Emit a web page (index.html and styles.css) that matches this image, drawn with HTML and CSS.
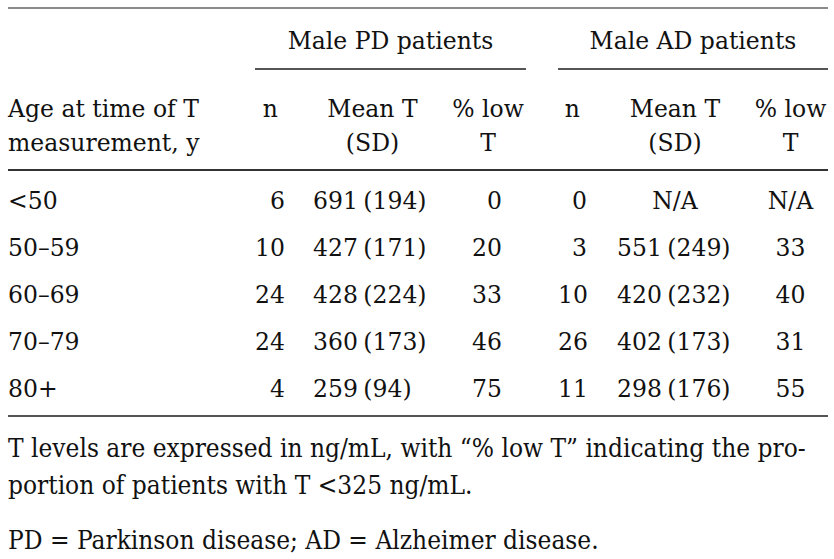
FILE: index.html
```html
<!DOCTYPE html>
<html lang="en">
<head>
<meta charset="utf-8">
<title>Testosterone levels by age</title>
<link rel="stylesheet" href="styles.css">
</head>
<body>
<div class="page">
  <div class="table">
    <div class="row group-row">
      <div class="cell"></div>
      <div class="cell group group-pd">Male PD patients</div>
      <div class="cell"></div>
      <div class="cell group group-ad">Male AD patients</div>
    </div>
    <div class="row head-row">
      <div class="cell age">Age at time of T<br>measurement, y</div>
      <div class="cell n-head">n</div>
      <div class="cell center">Mean T<br>(SD)</div>
      <div class="cell center">% low<br>T</div>
      <div class="cell"></div>
      <div class="cell n-head">n</div>
      <div class="cell center">Mean T<br>(SD)</div>
      <div class="cell center">% low<br>T</div>
    </div>
    <div class="body">
      <div class="row data-row">
        <div class="cell age">&lt;50</div>
        <div class="cell num">6</div>
        <div class="cell mean">691 (194)</div>
        <div class="cell pct">0</div>
        <div class="cell"></div>
        <div class="cell num">0</div>
        <div class="cell center">N/A</div>
        <div class="cell center">N/A</div>
      </div>
      <div class="row data-row">
        <div class="cell age">50–59</div>
        <div class="cell num">10</div>
        <div class="cell mean">427 (171)</div>
        <div class="cell pct">20</div>
        <div class="cell"></div>
        <div class="cell num">3</div>
        <div class="cell mean-ad">551 (249)</div>
        <div class="cell center">33</div>
      </div>
      <div class="row data-row">
        <div class="cell age">60–69</div>
        <div class="cell num">24</div>
        <div class="cell mean">428 (224)</div>
        <div class="cell pct">33</div>
        <div class="cell"></div>
        <div class="cell num">10</div>
        <div class="cell mean-ad">420 (232)</div>
        <div class="cell center">40</div>
      </div>
      <div class="row data-row">
        <div class="cell age">70–79</div>
        <div class="cell num">24</div>
        <div class="cell mean">360 (173)</div>
        <div class="cell pct">46</div>
        <div class="cell"></div>
        <div class="cell num">26</div>
        <div class="cell mean-ad">402 (173)</div>
        <div class="cell center">31</div>
      </div>
      <div class="row data-row">
        <div class="cell age">80+</div>
        <div class="cell num">4</div>
        <div class="cell mean">259 (94)</div>
        <div class="cell pct">75</div>
        <div class="cell"></div>
        <div class="cell num">11</div>
        <div class="cell mean-ad">298 (176)</div>
        <div class="cell center">55</div>
      </div>
    </div>
  </div>
  <div class="notes">
    <p class="note">T levels are expressed in ng/mL, with “% low T” indicating the pro-<br>portion of patients with T &lt;325 ng/mL.</p>
    <p class="note note-abbr">PD = Parkinson disease; AD = Alzheimer disease.</p>
  </div>
</div>
</body>
</html>
```
FILE: styles.css
```css
html, body {
  margin: 0;
  padding: 0;
  background: #ffffff;
}

.page {
  width: 820px;
  padding: 7px 6px 0 8px;
  color: #111111;
  font-family: "DejaVu Serif", "Liberation Serif", serif;
  font-size: 23.5px;
}

.table {
  border-top: 2px solid #8a8a8a;
  border-bottom: 2px solid #555555;
}

.row {
  display: grid;
  grid-template-columns: 247px 40px 155px 76px 32px 39px 156px 75px;
}

.group-row {
  grid-template-columns: 247px 271px 32px 270px;
  line-height: 34px;
}

.group {
  padding: 15px 0 10px;
  text-align: center;
  border-bottom: 2px solid #555555;
}

.head-row {
  line-height: 34px;
  padding: 22px 0 9px;
  border-bottom: 2px solid #333333;
}

.body {
  padding: 7px 0 2px;
}

.data-row {
  line-height: 47px;
}

.cell {
  white-space: nowrap;
}

.center {
  text-align: center;
}

.n-head {
  text-align: right;
  padding-right: 17px;
}

.num {
  text-align: right;
  padding-right: 10px;
}

.mean {
  padding-left: 18px;
  word-spacing: -2px;
}

.mean-ad {
  padding-left: 20px;
  word-spacing: -2px;
}

.pct {
  text-align: right;
  padding-right: 24px;
}

.notes {
  padding-top: 13px;
  font-stretch: condensed;
  font-size: 26px;
}

.note {
  margin: 0;
  line-height: 37px;
}

.note-abbr {
  margin-top: 18px;
}
```
